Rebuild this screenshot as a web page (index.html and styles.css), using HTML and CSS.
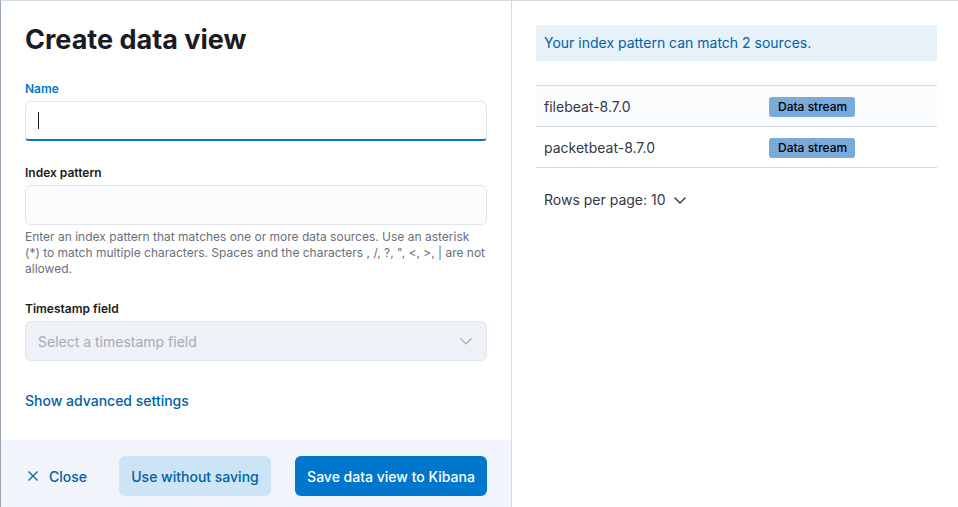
FILE: index.html
```html
<!DOCTYPE html>
<html lang="en">
<head>
<meta charset="utf-8">
<title>Create data view</title>
<link rel="stylesheet" href="styles.css">
</head>
<body>
<div class="app">
  <section class="editor">
    <div class="editor-body">
      <h1 class="title">Create data view</h1>
      <div class="field">
        <label class="label label-active">Name</label>
        <div class="input input-focus"><span class="caret"></span></div>
      </div>
      <div class="field">
        <label class="label">Index pattern</label>
        <div class="input"></div>
        <p class="help">Enter an index pattern that matches one or more data sources. Use an asterisk (*) to match multiple characters. Spaces and the characters , /, ?, ", &lt;, &gt;, | are not allowed.</p>
      </div>
      <div class="field">
        <label class="label">Timestamp field</label>
        <div class="input select-disabled">
          <span class="placeholder">Select a timestamp field</span>
          <svg class="chev" width="16" height="16" viewBox="0 0 16 16"><path d="M2.5 5.5 8 11l5.5-5.5" fill="none" stroke="currentColor" stroke-width="1.2"/></svg>
        </div>
      </div>
      <a class="advanced">Show advanced settings</a>
    </div>
    <footer class="footer">
      <button class="btn-empty">
        <svg width="16" height="16" viewBox="0 0 16 16"><path d="M3.5 3.5l9 9M12.5 3.5l-9 9" fill="none" stroke="currentColor" stroke-width="1.2"/></svg>
        <span>Close</span>
      </button>
      <div class="actions">
        <button class="btn btn-secondary">Use without saving</button>
        <button class="btn btn-primary">Save data view to Kibana</button>
      </div>
    </footer>
  </section>
  <aside class="preview">
    <div class="callout">Your index pattern can match 2 sources.</div>
    <div class="table">
      <div class="row row-hover">
        <div class="cell">filebeat-8.7.0</div>
        <div class="cell"><span class="badge">Data stream</span></div>
      </div>
      <div class="row">
        <div class="cell">packetbeat-8.7.0</div>
        <div class="cell"><span class="badge">Data stream</span></div>
      </div>
    </div>
    <div class="pager">
      <span>Rows per page: 10</span>
      <svg width="16" height="16" viewBox="0 0 16 16"><path d="M2.5 5.5 8 11l5.5-5.5" fill="none" stroke="currentColor" stroke-width="1.4"/></svg>
    </div>
  </aside>
</div>
</body>
</html>
```
FILE: styles.css
```css
* { box-sizing: border-box; }
html, body { margin: 0; padding: 0; }
body {
  font-family: Inter, "Noto Sans", sans-serif;
  color: #343741;
  background: #fff;
  width: 958px;
  height: 507px;
  overflow: hidden;
}
.app {
  display: flex;
  height: 507px;
  border-top: 1px solid #d3dae6;
  border-left: 1px solid #98a2b3;
}
.editor {
  width: 511px;
  flex: none;
  display: flex;
  flex-direction: column;
  border-right: 1px solid #d3dae6;
}
.editor-body {
  flex: 1;
  padding: 23px 24px 0 24px;
}
.title {
  margin: 0 0 23px;
  font-size: 27px;
  line-height: 32px;
  font-weight: 700;
  color: #1a1c21;
}
.field { margin-bottom: 22px; }
.label {
  display: block;
  font-size: 12px;
  line-height: 20px;
  font-weight: 600;
  color: #1a1c21;
  margin-bottom: 2px;
}
.label-active { color: #0077cc; }
.input {
  height: 40px;
  border: 1px solid #e2e6ef;
  border-radius: 6px;
  background: #fbfcfd;
  display: flex;
  align-items: center;
  padding: 0 12px;
  font-size: 14px;
}
.input-focus {
  background: #fff;
  border-bottom: 2px solid #0077cc;
  border-bottom-left-radius: 4px;
  border-bottom-right-radius: 4px;
}
.caret {
  display: block;
  width: 1px;
  height: 17px;
  background: #1a1c21;
}
.help {
  margin: 4px 0 0;
  font-size: 12px;
  line-height: 16px;
  color: #69707d;
}
.select-disabled {
  background: #eef2f7;
  justify-content: space-between;
}
.placeholder { color: #a2abba; }
.chev { color: #a2abba; }
.advanced {
  display: inline-block;
  margin-top: 8px;
  font-size: 14px;
  line-height: 20px;
  font-weight: 500;
  color: #0061a6;
}
.footer {
  height: 67px;
  flex: none;
  background: #f1f4fa;
  display: flex;
  align-items: flex-start;
  justify-content: space-between;
  padding: 16px 24px 0;
}
button { font-family: inherit; cursor: pointer; }
.btn-empty {
  display: flex;
  align-items: center;
  gap: 8px;
  height: 40px;
  border: 0;
  background: transparent;
  color: #0061a6;
  font-size: 14px;
  font-weight: 500;
  padding: 0;
}
.actions { display: flex; gap: 24px; }
.btn {
  height: 40px;
  border: 0;
  border-radius: 6px;
  font-size: 14px;
  font-weight: 500;
  padding: 0 12px;
}
.btn-secondary { background: #cce4f5; color: #0061a6; width: 152px; }
.btn-primary { background: #0077cc; color: #fff; width: 192px; }
.preview {
  flex: 1;
  padding: 24px 21px 0 24px;
}
.callout {
  background: #e6f1fa;
  color: #0061a6;
  font-size: 14px;
  line-height: 20px;
  padding: 8px 8px;
  height: 36px;
}
.table {
  margin-top: 24px;
  border-top: 1px solid #d3dae6;
}
.row {
  display: grid;
  grid-template-columns: 225px 1fr;
  height: 41px;
  border-bottom: 1px solid #d3dae6;
  align-items: center;
}
.row-hover { background: #fafbfd; }
.cell {
  padding: 0 8px;
  font-size: 14px;
  color: #343741;
}
.badge {
  display: inline-block;
  vertical-align: middle;
  margin-top: 2px;
  background: #79aad9;
  color: #000;
  font-size: 12px;
  line-height: 20px;
  font-weight: 500;
  padding: 0 8px 0 9px;
  border-radius: 3px;
}
.pager {
  display: flex;
  align-items: center;
  gap: 6px;
  margin-top: 23px;
  padding-left: 8px;
  font-size: 14px;
  color: #343741;
}
.pager svg { color: #343741; }
```
